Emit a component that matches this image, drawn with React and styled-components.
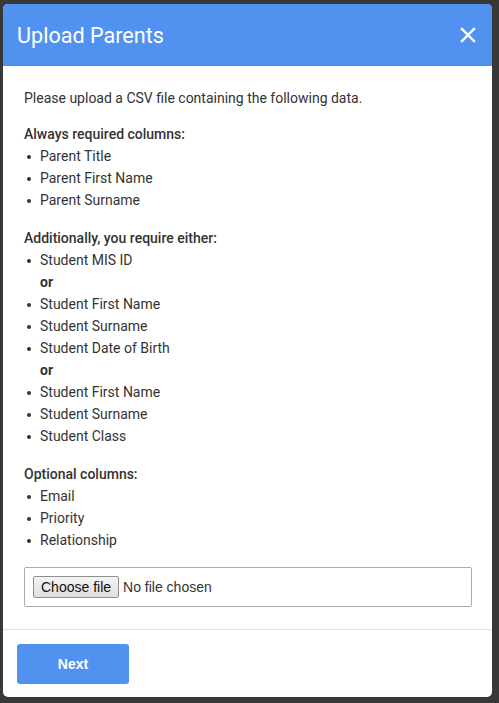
import React from "react";
import styled, { createGlobalStyle } from "styled-components";

const GlobalStyle = createGlobalStyle`
  html, body {
    margin: 0;
    padding: 0;
    background: #383838;
  }
  * { box-sizing: border-box; }
`;

const Page = styled.div`
  width: 499px;
  height: 703px;
  padding: 4px 7px 6px 3px;
  background: #383838;
`;

const Modal = styled.div`
  display: flex;
  flex-direction: column;
  height: 100%;
  background: #fff;
  border-radius: 5px;
  overflow: hidden;
`;

const Header = styled.div`
  display: flex;
  align-items: center;
  justify-content: space-between;
  height: 62px;
  padding: 0 16px 0 14px;
  background: #5192f0;
  color: #fff;
`;

const Title = styled.h2`
  margin: 0;
  font-family: Roboto, "Noto Sans", sans-serif;
  font-size: 21.6px;
  font-weight: 400;
`;

const Close = styled.button`
  display: flex;
  padding: 0;
  border: 0;
  background: none;
  cursor: pointer;
`;

const Body = styled.div`
  flex: 1;
  padding: 21px 20px 21px 21px;
  font-family: Roboto, "Noto Sans", sans-serif;
  font-size: 14px;
  line-height: 22px;
  color: #333;
  border-bottom: 1px solid #e2e2e2;
`;

const Intro = styled.p`
  margin: 0 0 14px;
`;

const Heading = styled.div`
  font-weight: 500;
`;

const List = styled.ul`
  margin: 0 0 16px;
  padding-left: 16px;
  list-style: none;
`;

const Item = styled.li`
  position: relative;
  font-weight: ${(p) => (p.$or ? 700 : 400)};

  &::before {
    content: "";
    display: ${(p) => (p.$or ? "none" : "block")};
    position: absolute;
    left: -13px;
    top: 10px;
    width: 4px;
    height: 4px;
    border-radius: 50%;
    background: #333;
  }
`;

const FileBox = styled.div`
  margin-top: 13px;
  height: 40px;
  padding: 0 8px;
  display: flex;
  align-items: center;
  border: 1px solid #aaa;
  border-radius: 2px;
  font-family: "Liberation Sans", Arial, sans-serif;
  font-size: 14px;
  color: #333;
`;

const ChooseButton = styled.span`
  display: inline-flex;
  align-items: center;
  height: 22px;
  padding: 0 7px;
  margin-right: 4px;
  border: 1px solid #8f8f8f;
  border-radius: 2px;
  background: linear-gradient(#f5f5f5, #dedede);
  color: #111;
`;

const Footer = styled.div`
  padding: 14px 14px 13px 14px;
`;

const NextButton = styled.button`
  width: 112px;
  height: 40px;
  border: 0;
  border-radius: 3px;
  background: #5192f0;
  color: #fff;
  font-family: "Liberation Sans", Arial, sans-serif;
  font-size: 14px;
  font-weight: 700;
  cursor: pointer;
`;

const sections = [
  {
    title: "Always required columns:",
    items: ["Parent Title", "Parent First Name", "Parent Surname"],
  },
  {
    title: "Additionally, you require either:",
    items: [
      "Student MIS ID",
      "or",
      "Student First Name",
      "Student Surname",
      "Student Date of Birth",
      "or",
      "Student First Name",
      "Student Surname",
      "Student Class",
    ],
  },
  {
    title: "Optional columns:",
    items: ["Email", "Priority", "Relationship"],
  },
];

export default function App() {
  return (
    <Page>
      <GlobalStyle />
      <Modal>
        <Header>
          <Title>Upload Parents</Title>
          <Close aria-label="Close">
            <svg width="16" height="16" viewBox="0 0 16 16">
              <path
                d="M2 2L14 14M14 2L2 14"
                stroke="#fff"
                strokeWidth="2.4"
                strokeLinecap="square"
              />
            </svg>
          </Close>
        </Header>
        <Body>
          <Intro>Please upload a CSV file containing the following data.</Intro>
          {sections.map((s) => (
            <div key={s.title}>
              <Heading>{s.title}</Heading>
              <List>
                {s.items.map((it, i) => (
                  <Item key={i} $or={it === "or"}>
                    {it}
                  </Item>
                ))}
              </List>
            </div>
          ))}
          <FileBox>
            <ChooseButton>Choose file</ChooseButton>
            No file chosen
          </FileBox>
        </Body>
        <Footer>
          <NextButton>Next</NextButton>
        </Footer>
      </Modal>
    </Page>
  );
}
